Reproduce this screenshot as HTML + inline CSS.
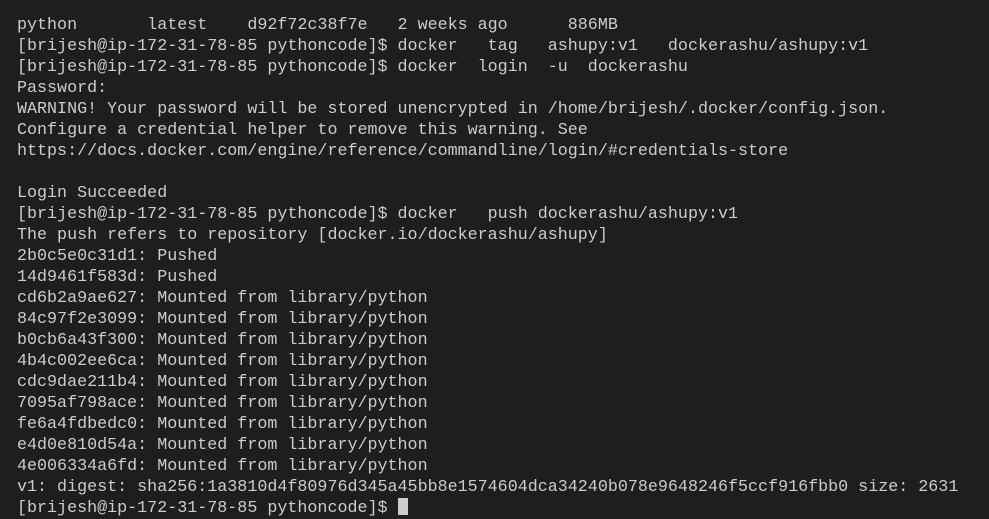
<!DOCTYPE html>
<html><head><style>
html,body{margin:0;padding:0;background:#1e1e1e;width:989px;height:507px;overflow:hidden}
pre{position:absolute;left:17px;top:15px;margin:0;font-family:"Liberation Mono",monospace;font-size:16.7px;line-height:21px;color:#cccccc}
.c{display:inline-block;width:10px;height:17px;background:#cccccc;vertical-align:-3px}
</style></head><body>
<pre>python       latest    d92f72c38f7e   2 weeks ago      886MB
[brijesh@ip-172-31-78-85 pythoncode]$ docker   tag   ashupy:v1   dockerashu/ashupy:v1
[brijesh@ip-172-31-78-85 pythoncode]$ docker  login  -u  dockerashu
Password:
WARNING! Your password will be stored unencrypted in /home/brijesh/.docker/config.json.
Configure a credential helper to remove this warning. See
https://docs.docker.com/engine/reference/commandline/login/#credentials-store

Login Succeeded
[brijesh@ip-172-31-78-85 pythoncode]$ docker   push dockerashu/ashupy:v1
The push refers to repository [docker.io/dockerashu/ashupy]
2b0c5e0c31d1: Pushed
14d9461f583d: Pushed
cd6b2a9ae627: Mounted from library/python
84c97f2e3099: Mounted from library/python
b0cb6a43f300: Mounted from library/python
4b4c002ee6ca: Mounted from library/python
cdc9dae211b4: Mounted from library/python
7095af798ace: Mounted from library/python
fe6a4fdbedc0: Mounted from library/python
e4d0e810d54a: Mounted from library/python
4e006334a6fd: Mounted from library/python
v1: digest: sha256:1a3810d4f80976d345a45bb8e1574604dca34240b078e9648246f5ccf916fbb0 size: 2631
[brijesh@ip-172-31-78-85 pythoncode]$ <span class="c"></span></pre>
</body></html>
